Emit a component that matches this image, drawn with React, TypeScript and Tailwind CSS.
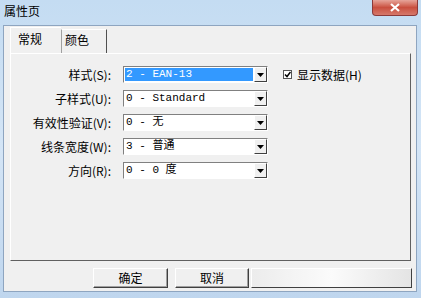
const rows = [
  { label: "样式(S):", value: "2 - EAN-13", selected: true },
  { label: "子样式(U):", value: "0 - Standard" },
  { label: "有效性验证(V):", value: "0 - 无" },
  { label: "线条宽度(W):", value: "3 - 普通" },
  { label: "方向(R):", value: "0 - 0 度" },
];

function Combo({ value, selected }: { value: string; selected?: boolean }) {
  return (
    <div className="flex h-[17px] w-[145px] border border-t-[#808080] border-l-[#808080] border-r-white border-b-white bg-white">
      <div className="flex flex-1 items-center p-[1px]">
        <span
          className={
            selected
              ? "flex h-full flex-1 items-center bg-[#3399ff] pl-[1px] text-white"
              : "flex h-full flex-1 items-center pl-[1px] text-black"
          }
        >
          {value}
        </span>
      </div>
      <div className="flex w-[13px] items-center justify-center border border-t-white border-l-white border-r-[#404040] border-b-[#404040] bg-[#f0f0f0]">
        <svg width="7" height="4" viewBox="0 0 7 4">
          <path d="M0 0h7L3.5 4z" fill="#000" />
        </svg>
      </div>
    </div>
  );
}

export default function App() {
  return (
    <div className="flex h-[298px] w-[421px] flex-col bg-gradient-to-b from-[#c4dcf2] via-[#d4e5f6] to-[#bfd6ee] font-['Noto_Sans_CJK_SC',sans-serif] text-[12px] text-black">
      {/* title bar */}
      <div className="flex h-[25px] items-start justify-between">
        <span className="pl-[4px] pt-[3px] leading-[16px]">属性页</span>
        <div className="mr-[3px] flex h-[16px] w-[46px] items-center justify-center rounded-b-[4px] border border-t-0 border-[#8b3a3a] bg-gradient-to-b from-[#e6a49a] via-[#c94f3f] to-[#d5786b]">
          <svg width="10" height="9" viewBox="0 0 10 9">
            <path d="M1 1l8 7M9 1L1 8" stroke="#fff" strokeWidth="2.2" />
          </svg>
        </div>
      </div>

      {/* client area */}
      <div className="ml-[3px] mr-[4px] mb-[6px] flex flex-1 flex-col border border-[#8ea5c0] bg-[#f0f0f0]">
        {/* tabs */}
        <div className="ml-[6px] mt-[1px] flex h-[26px] items-stretch">
          <div className="flex w-[51px] items-start border-l border-t border-white pl-[7px] pt-[3px] leading-[16px]">
            常规
          </div>
          <div className="mt-[2px] flex w-[46px] items-start border-l border-t border-r border-l-[#a0a0a0] border-t-white border-r-[#505050] pl-[3px] pt-[2px] leading-[16px]">
            颜色
          </div>
        </div>

        {/* panel */}
        <div className="ml-[6px] flex h-[208px] w-[401px] border border-t-white border-l-white border-r-[#606060] border-b-[#606060] pt-[12px]">
          <div className="flex flex-col gap-[7px]">
            {rows.map((r) => (
              <div key={r.label} className="flex items-center">
                <span className="w-[101px] pr-[1px] text-right leading-[17px]">{r.label}</span>
                <div className="ml-[11px] font-['Liberation_Mono','Noto_Sans_CJK_SC',monospace] text-[11px]">
                  <Combo value={r.value} selected={r.selected} />
                </div>
              </div>
            ))}
          </div>
          <div className="ml-[15px] flex h-[17px] items-center gap-[5px]">
            <div className="flex h-[9px] w-[9px] items-center justify-center border border-[#555] bg-white">
              <svg width="7" height="7" viewBox="0 0 7 7">
                <path d="M1 3.5l2 2L6.5 1" stroke="#000" strokeWidth="1.5" fill="none" />
              </svg>
            </div>
            <span className="leading-[16px]">显示数据(H)</span>
          </div>
        </div>

        {/* buttons */}
        <div className="mt-[7px] flex h-[20px]">
          <div className="ml-[89px] flex w-[75px] items-center justify-center border border-t-white border-l-white border-r-[#404040] border-b-[#404040] leading-[16px] shadow-[inset_-1px_-1px_0_#a0a0a0]">
            确定
          </div>
          <div className="ml-[7px] flex w-[74px] items-center justify-center border border-t-white border-l-white border-r-[#404040] border-b-[#404040] leading-[16px] shadow-[inset_-1px_-1px_0_#a0a0a0]">
            取消
          </div>
          <div className="ml-[2px] w-[161px] border border-t-white border-l-white border-r-[#404040] border-b-[#404040] bg-gradient-to-r from-[#ececec] via-[#fbfbfb] to-[#e4e4e4]" />
        </div>
      </div>
    </div>
  );
}
